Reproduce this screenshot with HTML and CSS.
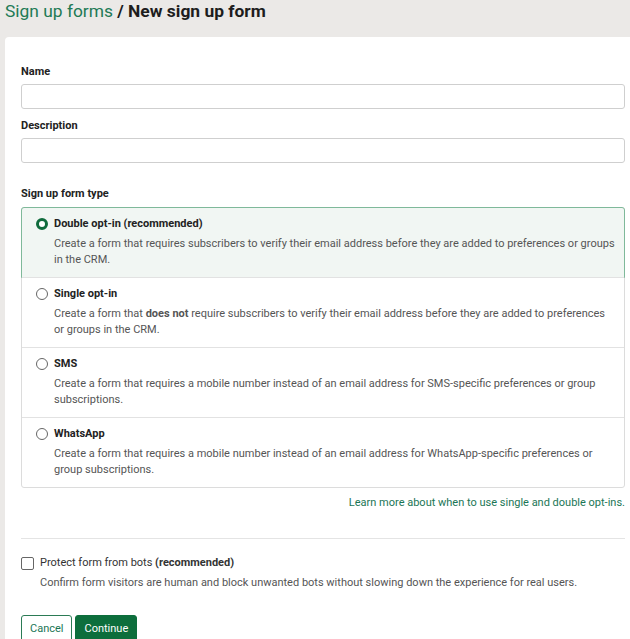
FILE: index.html
```html
<!DOCTYPE html>
<html lang="en">
<head>
    <meta charset="UTF-8">
    <meta name="viewport" content="width=device-width, initial-scale=1.0">
    <title>New sign up form</title>
    <link rel="stylesheet" href="styles.css">
</head>
<body>

    <div class="page">
        <h1 class="page-title"><a href="#" class="crumb">Sign up forms</a> / New sign up form</h1>

        <div class="card">
            <form id="signupForm">
                <div class="form-group">
                    <label for="name">Name</label>
                    <input type="text" id="name" name="name">
                </div>

                <div class="form-group">
                    <label for="description">Description</label>
                    <input type="text" id="description" name="description">
                </div>

                <div class="form-group type-group">
                    <div class="group-label">Sign up form type</div>
                    <div class="options">
                        <label class="option selected">
                            <span class="option-head">
                                <span class="radio"></span>
                                <span class="option-title">Double opt-in (recommended)</span>
                            </span>
                            <span class="option-desc">Create a form that requires subscribers to verify their email address before they are added to preferences or groups in the CRM.</span>
                        </label>
                        <label class="option">
                            <span class="option-head">
                                <span class="radio"></span>
                                <span class="option-title">Single opt-in</span>
                            </span>
                            <span class="option-desc">Create a form that <b>does not</b> require subscribers to verify their email address before they are added to preferences or groups in the CRM.</span>
                        </label>
                        <label class="option">
                            <span class="option-head">
                                <span class="radio"></span>
                                <span class="option-title">SMS</span>
                            </span>
                            <span class="option-desc">Create a form that requires a mobile number instead of an email address for SMS-specific preferences or group subscriptions.</span>
                        </label>
                        <label class="option">
                            <span class="option-head">
                                <span class="radio"></span>
                                <span class="option-title">WhatsApp</span>
                            </span>
                            <span class="option-desc">Create a form that requires a mobile number instead of an email address for WhatsApp-specific preferences or group subscriptions.</span>
                        </label>
                    </div>
                    <div class="learn-more">
                        <a href="#">Learn more about when to use single and double opt-ins.</a>
                    </div>
                </div>

                <hr class="divider">

                <div class="bots">
                    <label class="bots-check">
                        <span class="checkbox"></span>
                        <span>Protect form from bots <b>(recommended)</b></span>
                    </label>
                    <p class="bots-desc">Confirm form visitors are human and block unwanted bots without slowing down the experience for real users.</p>
                </div>

                <div class="actions">
                    <button type="button" class="btn btn-secondary">Cancel</button>
                    <button type="submit" class="btn btn-primary">Continue</button>
                </div>
            </form>
        </div>
    </div>

</body>
</html>
```

FILE: styles.css
```css
html, body {
    margin: 0;
    padding: 0;
}
body {
    font-family: Roboto, "Liberation Sans", Arial, sans-serif;
    font-size: 11px;
    color: #222;
    background-color: #ebe9e7;
    overflow: hidden;
}
.page {
    padding-left: 5px;
}
.page-title {
    margin: 0;
    height: 37px;
    font-size: 17.4px;
    line-height: 22px;
    font-weight: 700;
    color: #1d1d1d;
}
.page-title .crumb {
    color: #217a55;
    font-weight: 400;
    text-decoration: none;
}
.card {
    background-color: white;
    border-radius: 4px 0 0 0;
    margin-right: -11px;
    padding: 27px 16px 40px 16px;
}
.form-group {
    margin-bottom: 9px;
}
.form-group label,
.group-label {
    display: block;
    font-weight: 700;
    line-height: 16px;
    margin-bottom: 4px;
}
.form-group input {
    display: block;
    box-sizing: border-box;
    width: 100%;
    height: 25px;
    border: 1px solid #cfcfcf;
    border-radius: 3px;
}
.type-group {
    margin-top: 23px;
}
.type-group .group-label {
    margin-bottom: 5px;
}
.options {
    border: 1px solid #dcdcdc;
    border-radius: 3px;
}
.options .option {
    display: block;
    font-weight: 400;
    margin: 0;
    padding: 8px 8px 9px 14px;
    border-top: 1px solid #e2e2e2;
    cursor: pointer;
}
.options .option:first-child {
    border-top: none;
}
.options .option.selected {
    margin: -1px;
    background-color: #f1f6f3;
    border: 1px solid #7fb99a;
    border-radius: 3px 3px 0 0;
}
.option-head {
    display: flex;
    align-items: center;
    gap: 6px;
    line-height: 16px;
}
.option-title {
    font-weight: 700;
}
.radio {
    box-sizing: border-box;
    width: 12px;
    height: 12px;
    border: 1px solid #666;
    border-radius: 50%;
    background: white;
}
.selected .radio {
    border: 3.5px solid #0f6b3c;
}
.option-desc {
    display: block;
    margin-top: 4px;
    padding-left: 18px;
    line-height: 16px;
    color: #555;
}
.learn-more {
    text-align: right;
    line-height: 16px;
    margin-top: 7px;
}
.learn-more a {
    color: #1b7656;
    text-decoration: none;
}
.divider {
    border: none;
    border-top: 1px solid #e4e4e4;
    margin: 27px 0 16px 0;
}
.bots-check {
    display: flex;
    align-items: center;
    gap: 6px;
    line-height: 16px;
    color: #333;
}
.checkbox {
    box-sizing: border-box;
    width: 13px;
    height: 13px;
    border: 1px solid #666;
    border-radius: 2px;
    background: white;
}
.bots-desc {
    margin: 4px 0 0 19px;
    line-height: 16px;
    color: #555;
}
.actions {
    display: flex;
    gap: 3px;
    margin-top: 24px;
}
.btn {
    font-family: inherit;
    font-size: 11px;
    height: 27px;
    padding: 0 8px;
    border-radius: 3px;
    cursor: pointer;
}
.btn-secondary {
    background-color: white;
    color: #1b7656;
    border: 1px solid #2b7b55;
}
.btn-primary {
    background-color: #0d6e3c;
    color: white;
    border: 1px solid #0d6e3c;
}
.btn-primary:hover {
    background-color: #0a5c32;
}
```
